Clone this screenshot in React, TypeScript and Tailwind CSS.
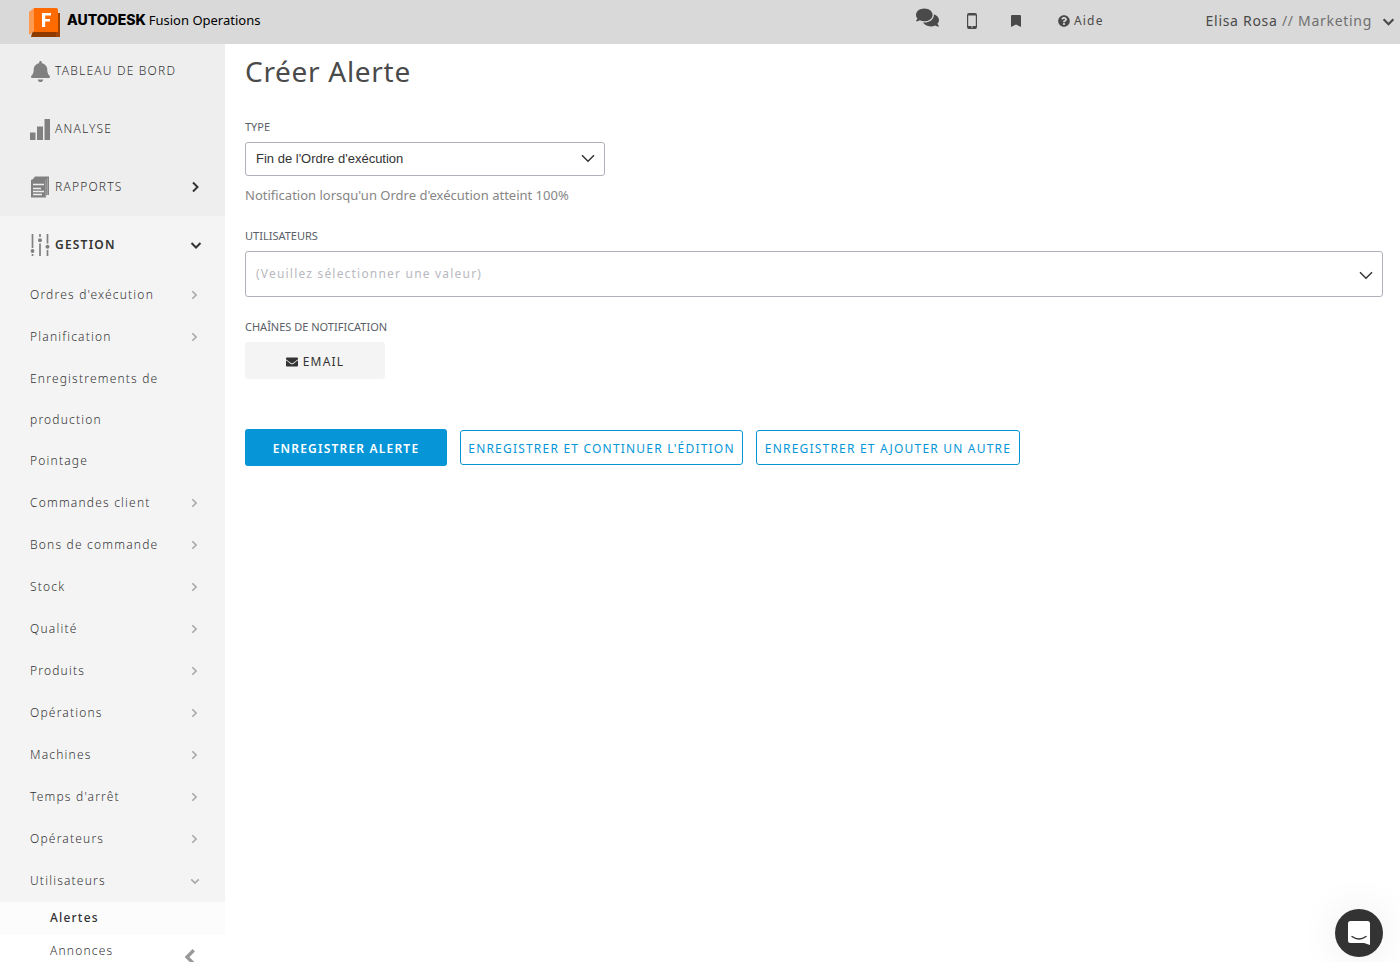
import React from "react";
import { FaBell, FaBookmark, FaComments, FaEnvelope, FaQuestionCircle } from "react-icons/fa";

type Direction = "right" | "down" | "left";

const paths: Record<Direction, string> = {
  right: "M4 1.5 8.5 6 4 10.5",
  down: "M1.5 4 6 8.5 10.5 4",
  left: "M8.5 1.5 4 6l4.5 4.5",
};

function Chevron({ dir, className, width = 2 }: { dir: Direction; className: string; width?: number }) {
  return (
    <svg viewBox="0 0 12 12" fill="none" stroke="currentColor" strokeWidth={width} className={className} aria-hidden="true">
      <path d={paths[dir]} />
    </svg>
  );
}

function FusionLogo() {
  return (
    <svg viewBox="0 0 31 29" className="h-[29px] w-[31px]" aria-hidden="true">
      <path d="M0 4 5 0v23l-5 4z" fill="#ff9a52" />
      <path d="M5 23h24l-2 6H2l1-4z" fill="#8f3a00" />
      <path d="M27 5h4v24h-4z" fill="#a34400" />
      <path d="M5 0h22q2 0 2 2v22H5z" fill="#ff6b00" />
      <path d="M13 5h9v2.600h-5.800v3.400H21v2.600h-4.800V19H13z" fill="#fff" />
    </svg>
  );
}

function BarsIcon() {
  return (
    <svg viewBox="0 0 20 21" fill="currentColor" className="h-[21px] w-5" aria-hidden="true">
      <path d="M0 13.500h5.500V21H0zM7 7.500h6V21H7zM14.500 0H20v21h-5.500z" />
    </svg>
  );
}

function ReportsIcon() {
  return (
    <svg viewBox="0 0 20 22" fill="none" className="h-[22px] w-5" aria-hidden="true">
      <path d="M5 .5h14V19h-3v2.500H1V4l2-1z" fill="#808080" />
      <path d="M15.800 21V3.800M17.600 19V2.200" stroke="#b5b5b5" strokeWidth=".7" />
      <path d="M3 8.500h11M3 12.500h8M3 15.500h11M3 18.500h9" stroke="#eee" strokeWidth="1.300" />
    </svg>
  );
}

function SlidersIcon() {
  return (
    <svg viewBox="0 0 20 22" fill="none" className="h-[22px] w-5" aria-hidden="true">
      <path
        d="M2.500 0v14M2.500 20V22M10 0v3M10 9.500v12.500M17.500 0v9.500M17.500 16V22"
        stroke="#808080"
        strokeWidth="1.700"
      />
      <g fill="#808080">
        <circle cx="2.500" cy="17" r="1.900" />
        <circle cx="10" cy="6.300" r="2" />
        <circle cx="17.500" cy="12.800" r="2" />
      </g>
    </svg>
  );
}

function PhoneIcon() {
  return (
    <svg viewBox="0 0 10 16" className="h-4 w-2.5" aria-hidden="true">
      <rect x=".6" y=".6" width="8.800" height="14.800" rx="1.400" fill="none" stroke="currentColor" strokeWidth="1.200" />
      <path d="M1 1h8v1.500H1zM1 13h8v2.200H1z" fill="currentColor" />
      <circle cx="5" cy="14" r=".8" fill="#d9d9d9" />
    </svg>
  );
}

const submenu: { label: string; chevron: boolean }[] = [
  { label: "Ordres d'exécution", chevron: true },
  { label: "Planification", chevron: true },
  { label: "Enregistrements de production", chevron: false },
  { label: "Pointage", chevron: false },
  { label: "Commandes client", chevron: true },
  { label: "Bons de commande", chevron: true },
  { label: "Stock", chevron: true },
  { label: "Qualité", chevron: true },
  { label: "Produits", chevron: true },
  { label: "Opérations", chevron: true },
  { label: "Machines", chevron: true },
  { label: "Temps d'arrêt", chevron: true },
  { label: "Opérateurs", chevron: true },
];

function Header() {
  return (
    <header className="flex h-11 shrink-0 items-center justify-between bg-[#d9d9d9] pr-[5px] pl-[29px] text-[#4a4a4a]">
      <a href="#accueil" className="flex items-center gap-[7px] text-black">
        <FusionLogo />
        <span className="flex items-baseline gap-[3px] pb-1">
          <span className="font-['Inter',sans-serif] text-sm font-extrabold">AUTODESK</span>
          <span className="text-[13px]">Fusion Operations</span>
        </span>
      </a>
      <div className="flex items-center gap-[102px] pb-0.5">
        <nav aria-label="Outils" className="flex items-center">
          <button aria-label="Messages" className="mr-7 pb-2">
            <FaComments className="size-[23px]" />
          </button>
          <button aria-label="Mobile" className="mr-[34px]">
            <PhoneIcon />
          </button>
          <button aria-label="Favoris" className="mr-[37px]">
            <FaBookmark className="h-3 w-2.5" preserveAspectRatio="none" />
          </button>
          <a href="#aide" className="flex items-center gap-1 text-xs tracking-widest">
            <FaQuestionCircle className="size-3" />
            Aide
          </a>
        </nav>
        <button className="flex items-center gap-2.5 text-sm tracking-wider">
          <span>
            Elisa Rosa <span className="text-[#707070]">// Marketing</span>
          </span>
          <Chevron dir="down" className="size-[13px]" />
        </button>
      </div>
    </header>
  );
}

function Sidebar() {
  return (
    <aside className="relative w-[225px] shrink-0 overflow-hidden bg-white text-xs font-light tracking-widest text-[#333]">
      <nav aria-label="Menu principal">
        <div className="bg-[#eee]">
          <a href="#tableau" className="flex h-14 items-center gap-[5px] pb-0.5 pl-[30px]">
            <span className="flex w-5 justify-center text-[#808080]">
              <FaBell className="h-[21px] w-[19px]" preserveAspectRatio="none" />
            </span>
            <span>TABLEAU DE BORD</span>
          </a>
          <a href="#analyse" className="flex h-[58px] items-center gap-[5px] pl-[30px]">
            <span className="text-[#808080]">
              <BarsIcon />
            </span>
            <span>ANALYSE</span>
          </a>
          <a href="#rapports" className="flex h-[58px] items-center gap-[5px] pr-6 pl-[30px]">
            <ReportsIcon />
            <span className="flex-1">RAPPORTS</span>
            <Chevron dir="right" className="size-3 text-[#333]" />
          </a>
        </div>
        <div className="bg-[#f4f4f4]">
          <a href="#gestion" className="flex h-[58px] items-center gap-[5px] pr-[23px] pl-[30px] font-semibold">
            <SlidersIcon />
            <span className="flex-1">GESTION</span>
            <Chevron dir="down" className="size-3" />
          </a>
          {submenu.map((item) => (
            <a key={item.label} href="#menu" className="flex min-h-[42px] items-start justify-between pr-[26px] pl-[30px] leading-[41px]">
              <span>{item.label}</span>
              {item.chevron && <Chevron dir="right" className="h-[42px] w-2.5 text-[#aaa]" />}
            </a>
          ))}
          <a href="#utilisateurs" className="flex min-h-[42px] items-start justify-between pr-[25px] pl-[30px] leading-[41px]">
            <span>Utilisateurs</span>
            <Chevron dir="down" className="h-[42px] w-2.5 text-[#aaa]" />
          </a>
        </div>
        <a href="#alertes" className="block bg-[#fcfcfc] pb-px pl-[50px] leading-8 font-medium">
          Alertes
        </a>
        <a href="#annonces" className="block pb-px pl-[50px] leading-8">
          Annonces
        </a>
      </nav>
      <button aria-label="Réduire le menu" className="absolute right-[26px] -bottom-1 text-[#999]">
        <Chevron dir="left" className="size-[18px]" width={2.2} />
      </button>
    </aside>
  );
}

const labelClass = "block text-[11px] leading-4 text-[#5a6068]";

function AlertForm() {
  return (
    <main className="min-w-0 flex-1 pt-[9px] pr-[17px] pl-5">
      <h1 className="text-[28px] leading-9 tracking-wide text-[#4a4a4a]">Créer Alerte</h1>
      <form onSubmit={(e) => e.preventDefault()}>
        <div className="pt-[30px]">
          <label htmlFor="type" className={labelClass}>
            TYPE
          </label>
          <div className="relative mt-[7px] w-[360px] max-w-full">
            <select
              id="type"
              className="h-[34px] w-full appearance-none rounded-[3px] border border-[#b1b1bb] bg-white pl-2.5 font-['Liberation_Sans',sans-serif] text-[13px] text-[#333]"
            >
              <option>Fin de l'Ordre d'exécution</option>
            </select>
            <Chevron dir="down" width={1.1} className="pointer-events-none absolute top-2 right-[9px] size-4 text-[#333]" />
          </div>
          <p className="pt-[9px] text-[13px] leading-5 text-[#868686]">
            Notification lorsqu'un Ordre d'exécution atteint 100%
          </p>
        </div>
        <div className="pt-[23px]">
          <label htmlFor="users" className={labelClass}>
            UTILISATEURS
          </label>
          <div className="relative mt-[7px]">
            <select
              id="users"
              className="h-[46px] w-full appearance-none rounded-[3px] border border-[#b1b1bb] bg-white pl-2.5 text-xs tracking-widest text-[#b8b8c0]"
            >
              <option>(Veuillez sélectionner une valeur)</option>
            </select>
            <Chevron dir="down" width={1.1} className="pointer-events-none absolute top-4 right-[9px] size-4 text-[#333]" />
          </div>
        </div>
        <fieldset className="pt-[22px]">
          <legend className="contents">
            <span className={labelClass}>CHAÎNES DE NOTIFICATION</span>
          </legend>
          <button
            type="button"
            className="mt-[7px] flex h-[37px] w-[140px] items-center justify-center gap-[5px] rounded-[3px] bg-[#f4f4f4] pt-0.5 text-xs tracking-widest text-[#333]"
          >
            <FaEnvelope className="size-3" />
            EMAIL
          </button>
        </fieldset>
        <div className="flex flex-wrap items-center gap-[13px] pt-[50px] text-xs tracking-widest">
          <button className="h-[37px] w-[202px] rounded-[3px] bg-[#0696d7] pt-0.5 font-semibold text-white">ENREGISTRER ALERTE</button>
          <button className="h-[35px] w-[283px] rounded-[3px] border border-[#0696d7] pt-0.5 text-[#0696d7]">
            ENREGISTRER ET CONTINUER L'ÉDITION
          </button>
          <button className="h-[35px] w-[264px] rounded-[3px] border border-[#0696d7] pt-0.5 text-[#0696d7]">
            ENREGISTRER ET AJOUTER UN AUTRE
          </button>
        </div>
      </form>
    </main>
  );
}

export default function App() {
  return (
    <div className="flex h-screen flex-col overflow-hidden bg-white font-['Noto_Sans',sans-serif]">
      <Header />
      <div className="flex min-h-0 flex-1">
        <Sidebar />
        <AlertForm />
      </div>
      <button
        aria-label="Ouvrir la messagerie"
        className="fixed right-[17px] bottom-[5px] flex size-12 items-center justify-center rounded-full bg-[#333] shadow-[0_0_40px_rgba(0,0,0,0.08)]"
      >
        <svg viewBox="0 0 22 24" className="h-6 w-[22px]" aria-hidden="true">
          <path d="M2.500 0h17Q22 0 22 2.500V24l-6-2H2.500Q0 22 0 19.500v-17Q0 0 2.500 0z" fill="#fff" />
          <path d="M4 15.500q7 5 14 0" fill="none" stroke="#333" strokeWidth="1.400" strokeLinecap="round" />
        </svg>
      </button>
    </div>
  );
}
